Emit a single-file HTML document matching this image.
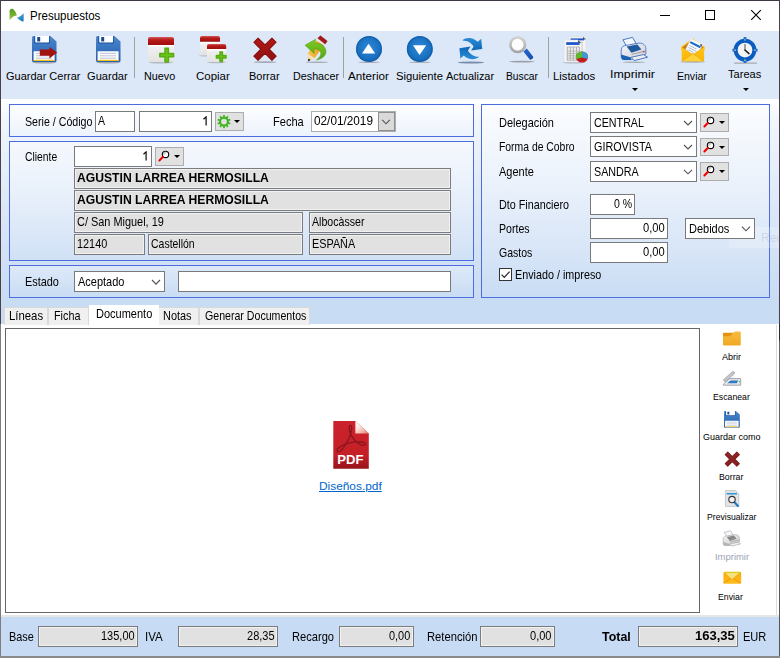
<!DOCTYPE html>
<html>
<head>
<meta charset="utf-8">
<title>Presupuestos</title>
<style>
*{box-sizing:border-box;margin:0;padding:0}
html,body{width:780px;height:658px;overflow:hidden;background:#fff}
body{font-family:"Liberation Sans",sans-serif;font-size:12px;color:#000;position:relative}
div,svg{position:absolute}
#win{left:0;top:0;width:780px;height:658px;background:#fff}
#title{left:1px;top:1px;width:778px;height:30px;background:#fff}
#tb{left:1px;top:31px;width:778px;height:68px;background:#dce8f8}
#body{left:1px;top:99px;width:778px;height:225px;background:linear-gradient(#ffffff 0px,#f1f6fd 20px,#d9e6f8 120px,#c8dcf4 200px,#c8dcf4 225px)}
.pnl{border:1px solid #4c6ce0;background:linear-gradient(rgba(255,255,255,.5),rgba(255,255,255,0))}
.t{white-space:nowrap;line-height:1;color:#000;transform-origin:0 0}
.in{background:#fff;border:1px solid #7a7a7a}
.ro{background:#e1e1e1;border:1px solid #7c7c7c;box-shadow:inset 0 0 0 1px #f1f1f1}
.btn{background:#e1e1e1;border:1px solid #adadad}
.sep{width:1px;height:40.5px;top:37px;background:#a0a0a0}
.tab{top:306.5px;height:18px;background:#f0f0f0;border:1px solid #d9d9d9;border-bottom:none}
.tab.sel{top:304.5px;height:24px;background:#fff;border-color:#fff}
#below{left:1px;top:324px;width:778px;height:293px;background:#fff}
#page{left:5px;top:328px;width:695px;height:285px;background:#fff;border:1px solid #666}
#status{left:1px;top:615px;width:778px;height:41px;background:#c7dcf4;border-top:2px solid #e7e7e7}
.arr{width:0;height:0;border-left:3px solid transparent;border-right:3px solid transparent;border-top:3.4px solid #000}
.sarr{width:0;height:0;border-left:3.3px solid transparent;border-right:3.3px solid transparent;border-top:3.3px solid #000;margin-left:-.4px}
</style>
</head>
<body>
<div id="win"></div>
<div id="title"></div>
<div id="tb"></div>
<div id="body"></div>
<div id="below"></div>
<!-- window borders -->
<div style="left:0;top:0;width:780px;height:1px;background:#3f3744"></div>
<div style="left:0;top:0;width:1px;height:324px;background:#4a4048"></div>
<div style="left:0;top:324px;width:1.3px;height:334px;background:#7d7d7d"></div>
<div style="left:779px;top:0;width:1px;height:324px;background:#4a4050"></div>
<div style="left:776px;top:324.5px;width:1.3px;height:291px;background:#dcdcdc"></div>
<div style="left:779px;top:324px;width:1px;height:292px;background:linear-gradient(#2a2a34 0,#2a2a34 16px,#666 17px,#5a5a5a 100%)"></div>
<div style="left:779px;top:616px;width:1px;height:42px;background:#555"></div>
<div style="left:0;top:656px;width:780px;height:2px;background:#8a8a8a"></div>

<!-- title bar controls -->
<svg style="left:8px;top:7px" width="18" height="17" viewBox="8 7 18 17"><defs><linearGradient id="ga" x1="0" y1="0" x2="0" y2="1"><stop offset="0" stop-color="#4f9a1e"/><stop offset="1" stop-color="#9ac83c"/></linearGradient><linearGradient id="gb" x1="0" y1="0" x2="1" y2="1"><stop offset="0" stop-color="#5ab0e0"/><stop offset="1" stop-color="#1470b8"/></linearGradient></defs><path d="M9.6 20.6V10.2C10.6 8.6 12.6 8.2 13.6 9.4C15.4 11.6 16.6 13.4 16.8 15.6C14 15.4 11.4 17.6 9.6 20.6Z" fill="url(#ga)"/><path d="M23.6 13.2V21.6C21 21.4 18.6 20 17 17.6C19.6 16.8 21.8 15.2 23.6 13.2Z" fill="url(#gb)"/></svg>
<svg style="left:659px;top:10px" width="12" height="12" viewBox="0 0 12 12"><path d="M1 5.5H11" stroke="#000" stroke-width="1" fill="none"/></svg>
<svg style="left:704px;top:9px" width="12" height="12" viewBox="0 0 12 12"><rect x="1.5" y="1.5" width="9" height="9" stroke="#000" stroke-width="1" fill="none"/></svg>
<svg style="left:750px;top:9px" width="12" height="12" viewBox="0 0 12 12"><path d="M1.2 1.2L10.8 10.8M10.8 1.2L1.2 10.8" stroke="#000" stroke-width="1.1" fill="none"/></svg>

<!-- toolbar -->
<div class="sep" style="left:134px"></div>
<div class="sep" style="left:343px"></div>
<div class="sep" style="left:548px"></div>
<svg style="left:30px;top:34px" width="30" height="31" viewBox="30 34 30 31"><defs><linearGradient id="f1b" x1="0" y1="0" x2="0" y2="1"><stop offset="0" stop-color="#4a88d0"/><stop offset=".5" stop-color="#3873be"/><stop offset="1" stop-color="#285fab"/></linearGradient></defs><ellipse cx="44.5" cy="62.6" rx="12.5" ry="0.8" fill="#8a8a90" opacity="0.7"/><g transform="translate(32 36) scale(1.0)"><path d="M1.6 0H18.4L24.5 5.6V24.4Q24.5 26 22.9 26H1.6Q0 26 0 24.4V1.6Q0 0 1.6 0Z" fill="url(#f1b)"/><path d="M2.2 0.2H17.8V6.4Q17.8 7.6 16.6 7.6H3.4Q2.2 7.6 2.2 6.4Z" fill="#1d4f97"/><path d="M3.2 0H17V5.8Q17 6.6 16.2 6.6H4Q3.2 6.6 3.2 5.8Z" fill="#fff"/><rect x="5.2" y="1" width="3" height="4.6" rx=".5" fill="#164a98"/><rect x="1.6" y="15.2" width="21" height="9.8" rx=".6" fill="#fdfdfd"/><rect x="1.6" y="23.8" width="21" height="1.2" fill="#f2c41a"/><path d="M4 17.4H20M4 19.8H20M4 22.2H20" stroke="#a9b4cc" stroke-width=".8"/><path d="M7.8 13.6H17.4V11L25.2 16.5L17.4 22.6V19.8H7.8Z" fill="#a21410"/></g></svg>
<svg style="left:94px;top:34px" width="30" height="31" viewBox="94 34 30 31"><defs><linearGradient id="f2b" x1="0" y1="0" x2="0" y2="1"><stop offset="0" stop-color="#4a88d0"/><stop offset=".5" stop-color="#3873be"/><stop offset="1" stop-color="#285fab"/></linearGradient></defs><ellipse cx="108.5" cy="62.6" rx="12.5" ry="0.8" fill="#8a8a90" opacity="0.7"/><g transform="translate(96 36) scale(1.0)"><path d="M1.6 0H18.4L24.5 5.6V24.4Q24.5 26 22.9 26H1.6Q0 26 0 24.4V1.6Q0 0 1.6 0Z" fill="url(#f2b)"/><path d="M2.2 0.2H17.8V6.4Q17.8 7.6 16.6 7.6H3.4Q2.2 7.6 2.2 6.4Z" fill="#1d4f97"/><path d="M3.2 0H17V5.8Q17 6.6 16.2 6.6H4Q3.2 6.6 3.2 5.8Z" fill="#fff"/><rect x="5.2" y="1" width="3" height="4.6" rx=".5" fill="#164a98"/><rect x="1.6" y="15.2" width="21" height="9.8" rx=".6" fill="#fdfdfd"/><rect x="1.6" y="23.8" width="21" height="1.2" fill="#f2c41a"/><path d="M4 17.4H20M4 19.8H20M4 22.2H20" stroke="#a9b4cc" stroke-width=".8"/></g></svg>
<svg style="left:146px;top:34px" width="32" height="31" viewBox="146 34 32 31"><defs><linearGradient id="nr" x1="0" y1="0" x2="0" y2="1"><stop offset="0" stop-color="#d45a5a"/><stop offset=".35" stop-color="#b81c1c"/><stop offset="1" stop-color="#a00c0c"/></linearGradient><linearGradient id="nw" x1="0" y1="0" x2="0" y2="1"><stop offset="0" stop-color="#f2f2f2"/><stop offset="1" stop-color="#e2e2e2"/></linearGradient></defs><ellipse cx="161" cy="62.6" rx="12.5" ry="0.8" fill="#9a9aa0" opacity="0.6"/><rect x="148" y="45" width="26" height="17" fill="url(#nw)"/><rect x="148" y="45" width="26" height="1.4" fill="#fff"/><path d="M148 45V39Q148 37 150 37H172Q174 37 174 39V45Z" fill="url(#nr)"/><path d="M165.0 48.2h3.4v5.2h5.2v3.4h-5.2v5.2h-3.4v-5.2h-5.2v-3.4h5.2z" fill="#69c416" stroke="#58ac12" stroke-width="1.5" stroke-linejoin="round"/></svg>
<svg style="left:198px;top:34px" width="32" height="31" viewBox="198 34 32 31"><defs><linearGradient id="cr" x1="0" y1="0" x2="0" y2="1"><stop offset="0" stop-color="#d45a5a"/><stop offset=".35" stop-color="#b81c1c"/><stop offset="1" stop-color="#a00c0c"/></linearGradient><linearGradient id="cw" x1="0" y1="0" x2="0" y2="1"><stop offset="0" stop-color="#f2f2f2"/><stop offset="1" stop-color="#e2e2e2"/></linearGradient></defs><ellipse cx="207" cy="55.8" rx="8" ry="0.7" fill="#9a9aa0" opacity="0.6"/><ellipse cx="216.5" cy="62.5" rx="9.5" ry="0.7" fill="#9a9aa0" opacity="0.6"/><rect x="200" y="41.8" width="20" height="13.5" fill="url(#cw)"/><rect x="200" y="41.8" width="20" height="1.4" fill="#fff"/><path d="M200 41.8V38Q200 36 202 36H218Q220 36 220 38V41.8Z" fill="url(#cr)"/><rect x="207" y="49" width="19.2" height="13" fill="url(#cw)"/><rect x="207" y="49" width="19.2" height="1.4" fill="#fff"/><path d="M207 49V46Q207 44 209 44H224.2Q226.2 44 226.2 46V49Z" fill="url(#cr)"/><path d="M220.0 52.0h2.4v3.5999999999999996h3.5999999999999996v2.4h-3.5999999999999996v3.5999999999999996h-2.4v-3.5999999999999996h-3.5999999999999996v-2.4h3.5999999999999996z" fill="#69c416" stroke="#58ac12" stroke-width="1.5" stroke-linejoin="round"/></svg>
<svg style="left:250px;top:34px" width="30" height="31" viewBox="250 34 30 31"><defs><linearGradient id="dx" x1="0" y1="0" x2="1" y2="1"><stop offset="0" stop-color="#bb1c1c"/><stop offset="1" stop-color="#860c0c"/></linearGradient></defs><ellipse cx="265" cy="62.2" rx="11.5" ry="0.9" fill="#8a9098" opacity="0.7"/><g transform="rotate(45 265 49.2)"><path d="M262.0 36.400000000000006h6.0v9.8h9.8v6.0h-9.8v9.8h-6.0v-9.8h-9.8v-6.0h9.8z" fill="url(#dx)" stroke="#860c0c" stroke-width="1" stroke-linejoin="round"/></g></svg>
<svg style="left:302px;top:34px" width="30" height="31" viewBox="302 34 30 31"><defs><linearGradient id="up" x1="0" y1="0" x2="1" y2="0"><stop offset="0" stop-color="#f6c85a"/><stop offset=".6" stop-color="#f0a826"/><stop offset="1" stop-color="#e09018"/></linearGradient><linearGradient id="ug" x1="0" y1="0" x2="0" y2="1"><stop offset="0" stop-color="#7ccc22"/><stop offset="1" stop-color="#55a416"/></linearGradient></defs><ellipse cx="317" cy="62.3" rx="11.5" ry="0.8" fill="#8a8a90" opacity="0.65"/><path d="M316.2 40.6L323.8 45.4L314.4 58.2L307.6 53.4Z" fill="url(#up)"/><path d="M307.6 53.4L314.4 58.2L308 61.2Z" fill="#f7dfae"/><path d="M308.6 58.6L310.6 60L307.8 61.4Z" fill="#111"/><path d="M316.8 39.8L317.6 38.6L325.4 43.6L324.4 45.2Z" fill="#e8e8e8"/><path d="M317.8 38.2L320.4 35.8L327.2 41L325.2 44Z" fill="#a81616" stroke="#8c1010" stroke-width=".5" stroke-linejoin="round"/><path d="M305 45.2L315.6 39.2L314.6 43.2C321 42.6 326 46.6 326 51.6C326 55.6 322 59.2 316.4 60C320 57.6 321.6 54.6 320.6 52C319.6 49.6 317 48.6 313.8 49L314.2 53.4Z" fill="url(#ug)" stroke="#4a9412" stroke-width=".5" stroke-linejoin="round"/></svg>
<svg style="left:354px;top:34px" width="30" height="31" viewBox="354 34 30 31"><defs><radialGradient id="pc" cx=".5" cy=".45" r=".6"><stop offset="0" stop-color="#2d8ad8"/><stop offset=".7" stop-color="#1a70c0"/><stop offset="1" stop-color="#115daa"/></radialGradient></defs><ellipse cx="369" cy="62.3" rx="11" ry="0.8" fill="#8a8a90" opacity="0.65"/><circle cx="369" cy="49" r="13" fill="url(#pc)"/><circle cx="369" cy="49" r="12.2" fill="none" stroke="#0f5aa6" stroke-width="1.2" opacity=".6"/><path d="M368.6 43.8L375.2 53.4H362Z" fill="#fff"/></svg>
<svg style="left:405px;top:34px" width="30" height="31" viewBox="405 34 30 31"><defs><radialGradient id="qc" cx=".5" cy=".45" r=".6"><stop offset="0" stop-color="#2d8ad8"/><stop offset=".7" stop-color="#1a70c0"/><stop offset="1" stop-color="#115daa"/></radialGradient></defs><ellipse cx="419.8" cy="62.3" rx="11" ry="0.8" fill="#8a8a90" opacity="0.65"/><circle cx="419.8" cy="49" r="13" fill="url(#qc)"/><circle cx="419.8" cy="49" r="12.2" fill="none" stroke="#0f5aa6" stroke-width="1.2" opacity=".6"/><path d="M413.0 45.2H426.2L419.5 55Z" fill="#fff"/></svg>
<svg style="left:456px;top:34px" width="30" height="31" viewBox="456 34 30 31"><defs><linearGradient id="rf" x1="0" y1="0" x2="0" y2="1" ><stop offset="0" stop-color="#2b8cd8"/><stop offset="1" stop-color="#0f66b4"/></linearGradient></defs><ellipse cx="471" cy="62.5" rx="13" ry="1" fill="#5f7499" opacity="0.8"/><path d="M462.3 40.4C464.6 38.2 468 37.6 471 38.2C473.8 38.8 476.2 40.2 477.8 41.8L481.2 38.7L482.2 49L471 50.6L473.6 46.8C472.6 44.8 471.2 43.4 469.4 42.3C467.4 41.1 465 40.4 462.3 40.4Z" fill="url(#rf)"/><path d="M462.3 40.4C464.6 38.2 468 37.6 471 38.2C473.8 38.8 476.2 40.2 477.8 41.8L481.2 38.7L482.2 49L471 50.6L473.6 46.8C472.6 44.8 471.2 43.4 469.4 42.3C467.4 41.1 465 40.4 462.3 40.4Z" fill="url(#rf)" transform="rotate(180 470.8 48.6)"/></svg>
<svg style="left:506px;top:34px" width="32" height="31" viewBox="506 34 32 31"><defs><linearGradient id="sh" x1="0" y1="0" x2="1" y2="1"><stop offset="0" stop-color="#2a68cc"/><stop offset="1" stop-color="#1450b0"/></linearGradient><linearGradient id="sr" x1="0" y1="0" x2="0" y2="1"><stop offset="0" stop-color="#d2d2d2"/><stop offset="1" stop-color="#a4a4a4"/></linearGradient></defs><ellipse cx="521.8" cy="61.6" rx="13" ry="0.9" fill="#808088" opacity="0.7"/><path d="M523.4 51.6L526.8 48.6L533 56.6C534 58 531 60.6 529.8 59.4Z" fill="url(#sh)"/><circle cx="517.7" cy="44.7" r="7.3" fill="#f6f6f6" stroke="url(#sr)" stroke-width="2.6"/><circle cx="517.2" cy="44.2" r="5.2" fill="#fff" opacity=".8"/></svg>
<svg style="left:561px;top:34px" width="30" height="31" viewBox="561 34 30 31"><ellipse cx="574" cy="62.6" rx="11.5" ry="0.8" fill="#9a9aa0" opacity="0.6"/><path d="M569 36.7H583L586 39.6V58H569Z" fill="#f4f4f4" stroke="#d8d8d8" stroke-width=".5"/><path d="M583 36.7L586 39.6H583Z" fill="#555"/><rect x="570.6" y="38.4" width="13.4" height="2" fill="#1a52c8"/><path d="M582 42V55" stroke="#c8c8c8" stroke-width="2" stroke-dasharray="1.2 1"/><path d="M564.2 39.9H578L581.3 43V62H564.2Z" fill="#f6f6f6" stroke="#dcdcdc" stroke-width=".5"/><path d="M578 39.9L581.3 43H578Z" fill="#555"/><rect x="566.2" y="42.2" width="13.4" height="2.7" fill="#1a52c8"/><rect x="567" y="47" width="12.6" height="13.4" fill="#ececec"/><path d="M567.2 47V60.4" stroke="#a8a8a8" stroke-width=".9"/><path d="M570.3 47V60.4" stroke="#a8a8a8" stroke-width=".9"/><path d="M573.4 47V60.4" stroke="#a8a8a8" stroke-width=".9"/><path d="M576.5 47V60.4" stroke="#a8a8a8" stroke-width=".9"/><path d="M579.4 47V60.4" stroke="#a8a8a8" stroke-width=".9"/><path d="M567 47H579.6" stroke="#b0b0b0" stroke-width=".8"/><path d="M567 51.2H579.6" stroke="#b0b0b0" stroke-width=".8"/><path d="M567 53.5H579.6" stroke="#b0b0b0" stroke-width=".8"/><path d="M567 55.8H579.6" stroke="#b0b0b0" stroke-width=".8"/><path d="M567 58.1H579.6" stroke="#b0b0b0" stroke-width=".8"/><path d="M567 60.3H579.6" stroke="#b0b0b0" stroke-width=".8"/><ellipse cx="582" cy="57" rx="6.1" ry="5.6" fill="#c41c1c"/><path d="M582 57.6L576.2 59A6.1 5.6 0 0 1 582 51.4Z" fill="#5cba2e"/><path d="M582 57.6V51.4A6.1 5.6 0 0 1 587.7 59Z" fill="#3c9cd2"/></svg>
<svg style="left:619px;top:34px" width="31" height="31" viewBox="619 34 31 31"><defs><linearGradient id="Ppb" x1="0" y1="0" x2="1" y2="1"><stop offset="0" stop-color="#f4f4f6"/><stop offset="1" stop-color="#cfd2da"/></linearGradient></defs><ellipse cx="634" cy="62.3" rx="11.5" ry="0.8" fill="#8a8a90" opacity="0.6"/><path d="M622.9 39.8L632.5 37.4L636.3 43.6L626.6 46.4Z" fill="#f4f7fc" stroke="#3a6cc0" stroke-width=".9" stroke-linejoin="round"/><path d="M621.2 50C621.2 46.6 624 45.4 627 45.2L638.6 43.2C643 42.6 645.8 45.4 645.8 48.6V54.2L631.4 59.6H624.4C622.4 59.6 621.2 58.4 621.2 56.6Z" fill="url(#Ppb)" stroke="#3a6cc0" stroke-width=".8"/><path d="M621.2 54.4L631 57.4V60H624.2C622.4 60 621.2 58.8 621.2 57.2Z" fill="#1c62b4"/><path d="M626.6 46.6L637.4 44.4L641.4 49.6L631.4 52.8Z" fill="#1f5a9e"/><path d="M631 57.3L643.4 54.6L647.6 57.2L634.2 60.6Z" fill="#eeeeee" stroke="#3a6cc0" stroke-width=".9" stroke-linejoin="round"/><path d="M631.6 54.4L643 51.6" stroke="#555" stroke-width=".8" opacity=".6"/><circle cx="643.9" cy="51.6" r=".9" fill="#d03030"/></svg>
<svg style="left:679px;top:35px" width="29" height="30" viewBox="679 35 29 30"><defs><linearGradient id="mb" x1="0" y1="0" x2="0" y2="1"><stop offset="0" stop-color="#ffc61e"/><stop offset="1" stop-color="#fbb400"/></linearGradient></defs><ellipse cx="692.8" cy="61.9" rx="12.5" ry="0.8" fill="#8a92a8" opacity="0.6"/><path d="M681.7 47L692.6 38.9L704.1 47V50H681.7Z" fill="#c87a16" stroke="#ffc62a" stroke-width="1.2" stroke-linejoin="round"/><g transform="translate(0.6 2.3) rotate(27 694 44)"><rect x="687.4" y="38.6" width="13" height="14" fill="#f8f9fc" stroke="#e0e4ec" stroke-width=".4"/><rect x="688.2" y="41.2" width="11.4" height="2.1" fill="#1c6ccc"/><path d="M689 45.6H697M689 47.8H698M689 50H696" stroke="#a8b4cc" stroke-width=".8"/><path d="M698.6 39.2L700 41" stroke="#333" stroke-width="1.3"/></g><path d="M681.7 47L692.8 54.6L704.1 47V60.2Q704.1 61.5 702.8 61.5H683Q681.7 61.5 681.7 60.2Z" fill="url(#mb)"/><path d="M682.6 61L692.8 53.4L703.2 61" fill="#ffd23a" stroke="#e09a10" stroke-width=".5"/><path d="M681.9 47.3L692.8 54.8L703.9 47.3" fill="none" stroke="#e8a010" stroke-width=".5"/></svg>
<svg style="left:730px;top:34px" width="30" height="31" viewBox="730 34 30 31"><rect x="734" y="62.4" width="23" height="1.4" fill="#a6a9ad" rx=".6"/><path d="M743.6 37H746.4V40H743.6ZM743.6 60.4H746.4V63H743.6ZM732.4 48.8H735.4V51.4H732.4ZM754.6 48.8H757.6V51.4H754.6Z" fill="#2a74d0"/><circle cx="745" cy="50.1" r="9.4" fill="#f4f4f4" stroke="#0a5cc0" stroke-width="4"/><path d="M745 39.2V40.6M745 59.6V61M734.4 50.1H735.8M754.2 50.1H755.6" stroke="#f0e6a0" stroke-width="1.2"/><path d="M745 50.3V44" stroke="#777" stroke-width="1.3"/><path d="M745 50.1L749 53.6" stroke="#222" stroke-width="1.5" stroke-linecap="round"/></svg>
<div class="arr" style="left:631.6px;top:87.9px"></div>
<div class="arr" style="left:742.6px;top:87.9px"></div>

<!-- panels -->
<div class="pnl" style="left:9px;top:104px;width:465px;height:33px"></div>
<div class="pnl" style="left:9px;top:141px;width:465px;height:120px"></div>
<div class="pnl" style="left:9px;top:265px;width:465px;height:33px;background:linear-gradient(rgba(255,255,255,.3),rgba(255,255,255,0))"></div>
<div class="pnl" style="left:481px;top:104px;width:289px;height:194px"></div>
<div style="left:729px;top:227px;width:50px;height:21px;background:rgba(255,255,255,.22)"></div>
<div class="t" style="left:761px;top:231px;font-size:12px;line-height:14px;color:rgba(120,135,165,.22)">Rec</div>

<!-- inputs -->
<div class="in" style="left:95px;top:111px;width:40px;height:21px"></div>
<div class="in" style="left:139px;top:111px;width:73px;height:21px"></div>
<div class="btn" style="left:215px;top:112px;width:29px;height:19px"></div>
<svg style="left:216px;top:113px" width="16" height="17" viewBox="216 113 16 17"><path d="M223.14 115.06L224.86 115.06L224.93 116.79L226.09 117.17L227.15 115.80L228.54 116.81L227.58 118.25L228.29 119.24L229.96 118.76L230.49 120.39L228.86 120.99L228.86 122.21L230.49 122.81L229.96 124.44L228.29 123.97L227.57 124.95L228.54 126.39L227.15 127.40L226.08 126.04L224.92 126.41L224.86 128.14L223.14 128.14L223.07 126.41L221.91 126.03L220.85 127.40L219.46 126.39L220.42 124.95L219.71 123.96L218.04 124.44L217.51 122.81L219.14 122.21L219.14 120.99L217.51 120.39L218.04 118.76L219.71 119.23L220.43 118.25L219.46 116.81L220.85 115.80L221.92 117.16L223.08 116.79Z M226.9 121.6A2.9 2.9 0 1 0 221.1 121.6A2.9 2.9 0 1 0 226.9 121.6Z" fill="#3eb41e" fill-rule="evenodd"/></svg>
<div class="sarr" style="left:234px;top:120px"></div>
<div class="in" style="left:311px;top:111px;width:85px;height:21px;border-color:#adadad"></div>
<div style="left:378px;top:112px;width:17px;height:19px;background:#dadada;border:1px solid #8f8f8f"></div>
<svg style="left:381px;top:118px" width="10" height="7" viewBox="381 118 10 7"><path d="M382.2 119.8L386.0 123.8L389.8 119.8" fill="none" stroke="#505050" stroke-width="1.1"/></svg>

<div class="in" style="left:74px;top:146px;width:78px;height:20.5px"></div>
<div class="btn" style="left:155px;top:147px;width:29px;height:18.5px"></div>
<svg style="left:157px;top:148px" width="16" height="16" viewBox="157 148 16 16"><circle cx="165.5" cy="154.4" r="3.2" fill="#fff" stroke="#000" stroke-width="1.1"/><path d="M163.1 153.4L165.3 151.6M163.3 155.0L166.3 152.0" stroke="#888" stroke-width=".7"/><path d="M163.0 156.8L159.4 160.5" stroke="#f00000" stroke-width="2" stroke-linecap="round"/></svg>
<div class="sarr" style="left:174px;top:155px"></div>
<div class="ro" style="left:74px;top:168px;width:377px;height:20.5px"></div>
<div class="ro" style="left:74px;top:190px;width:377px;height:20.5px"></div>
<div class="ro" style="left:74px;top:212px;width:229px;height:20.5px"></div>
<div class="ro" style="left:309px;top:212px;width:142px;height:20.5px"></div>
<div class="ro" style="left:74px;top:234px;width:71px;height:20.5px"></div>
<div class="ro" style="left:148px;top:234px;width:155px;height:20.5px"></div>
<div class="ro" style="left:309px;top:234px;width:142px;height:20.5px"></div>
<div class="in" style="left:74px;top:271px;width:91px;height:20.5px"></div>
<svg style="left:151px;top:279px" width="11" height="7" viewBox="151 279 11 7"><path d="M152 280L156.0 284.2L160 280" fill="none" stroke="#505050" stroke-width="1.1"/></svg>
<div class="in" style="left:178px;top:271px;width:273px;height:20.5px"></div>

<div class="in" style="left:590px;top:112px;width:107px;height:20.5px"></div>
<div class="in" style="left:590px;top:136px;width:107px;height:20.5px"></div>
<div class="in" style="left:590px;top:161px;width:107px;height:20.5px"></div>
<svg style="left:683px;top:120px" width="11" height="7" viewBox="683 120 11 7"><path d="M684 121L688.0 125L692 121" fill="none" stroke="#505050" stroke-width="1.1"/></svg>
<svg style="left:683px;top:144px" width="11" height="7" viewBox="683 144 11 7"><path d="M684 145L688.0 149L692 145" fill="none" stroke="#505050" stroke-width="1.1"/></svg>
<svg style="left:683px;top:168px" width="11" height="7" viewBox="683 168 11 7"><path d="M684 169.8L688.0 173.8L692 169.8" fill="none" stroke="#505050" stroke-width="1.1"/></svg>
<div class="btn" style="left:700px;top:113px;width:29px;height:18.5px"></div>
<div class="btn" style="left:700px;top:137.5px;width:29px;height:18px"></div>
<div class="btn" style="left:700px;top:162px;width:29px;height:18.5px"></div>
<svg style="left:702px;top:114.1px" width="16" height="16" viewBox="702 114.1 16 16"><circle cx="710.5" cy="120.5" r="3.2" fill="#fff" stroke="#000" stroke-width="1.1"/><path d="M708.1 119.5L710.3 117.7M708.3 121.1L711.3 118.1" stroke="#888" stroke-width=".7"/><path d="M708.0 122.9L704.4 126.6" stroke="#f00000" stroke-width="2" stroke-linecap="round"/></svg>
<svg style="left:702px;top:138.6px" width="16" height="16" viewBox="702 138.6 16 16"><circle cx="710.5" cy="145.0" r="3.2" fill="#fff" stroke="#000" stroke-width="1.1"/><path d="M708.1 144.0L710.3 142.2M708.3 145.6L711.3 142.6" stroke="#888" stroke-width=".7"/><path d="M708.0 147.4L704.4 151.1" stroke="#f00000" stroke-width="2" stroke-linecap="round"/></svg>
<svg style="left:702px;top:163.1px" width="16" height="16" viewBox="702 163.1 16 16"><circle cx="710.5" cy="169.5" r="3.2" fill="#fff" stroke="#000" stroke-width="1.1"/><path d="M708.1 168.5L710.3 166.7M708.3 170.1L711.3 167.1" stroke="#888" stroke-width=".7"/><path d="M708.0 171.9L704.4 175.6" stroke="#f00000" stroke-width="2" stroke-linecap="round"/></svg>
<div class="sarr" style="left:719px;top:121px"></div>
<div class="sarr" style="left:719px;top:145.5px"></div>
<div class="sarr" style="left:719px;top:170px"></div>
<div class="in" style="left:590px;top:194px;width:45px;height:20.5px"></div>
<div class="in" style="left:590px;top:218px;width:78px;height:20.5px"></div>
<div class="in" style="left:685px;top:218px;width:70px;height:20.5px"></div>
<svg style="left:741px;top:225px" width="11" height="7" viewBox="741 225 11 7"><path d="M742 226.6L746.0 230.8L750 226.6" fill="none" stroke="#505050" stroke-width="1.1"/></svg>
<div class="in" style="left:590px;top:242px;width:78px;height:20.5px"></div>
<div style="left:499px;top:268px;width:13px;height:13px;background:#fff;border:1px solid #333"></div>
<svg style="left:499px;top:268px" width="13" height="13" viewBox="0 0 13 13"><path d="M2.6 6.6L5.3 9.3L10.6 3.6" stroke="#222" stroke-width="1.2" fill="none"/></svg>

<!-- tabs -->
<div class="tab" style="left:3.5px;width:44.5px"></div>
<div class="tab" style="left:47.5px;width:41.5px"></div>
<div class="tab" style="left:158px;width:41px"></div>
<div class="tab" style="left:198.5px;width:111px"></div>
<div class="tab sel" style="left:88.5px;width:70px"></div>
<div id="page"></div>
<svg style="left:332px;top:420px" width="38" height="50" viewBox="332 420 38 50"><defs><linearGradient id="pd" x1="0" y1="0" x2="0" y2="1"><stop offset="0" stop-color="#cc232b"/><stop offset=".7" stop-color="#c41f27"/><stop offset="1" stop-color="#98141c"/></linearGradient><linearGradient id="pf" x1="0" y1="0" x2="1" y2="1"><stop offset="0" stop-color="#fff"/><stop offset=".35" stop-color="#fbe8e4"/><stop offset="1" stop-color="#e8806c"/></linearGradient></defs><path d="M333.3 421H355.4L368.8 433.6V468.8H333.3Z" fill="url(#pd)"/><path d="M355.4 421L368.8 433.6H355.4Z" fill="url(#pf)"/><path d="M350.2 425.4C351.6 425.2 352 427 351.6 429.6C351 433.6 348.6 439.6 345.6 444.6C343 448.8 339.6 452.6 337.6 451.6C336 450.8 337.6 448 341.6 445.8C346.6 443.2 355.2 441.6 361 442C365.2 442.3 366.4 444 364.8 445C362.8 446.2 358.4 444.4 354.8 440.4C351.2 436.4 349 430.6 349.2 427.4C349.3 426 349.6 425.5 350.2 425.4Z" fill="none" stroke="#8c161c" stroke-width="1.3"/><text x="337.3" y="464" font-family="Liberation Sans" font-weight="700" font-size="12" fill="#fff" textLength="26.2" lengthAdjust="spacingAndGlyphs">PDF</text></svg>
<!-- sidebar icons -->
<svg style="left:722px;top:330px" width="20" height="17" viewBox="722 330 20 17"><defs><linearGradient id="fo" x1="0" y1="0" x2="0" y2="1"><stop offset="0" stop-color="#f8bc40"/><stop offset="1" stop-color="#f0a824"/></linearGradient></defs><path d="M723 333.6Q723 332.8 723.8 332.8H733.4V337H723Z" fill="#e2920e"/><path d="M723 337.2Q723 336.2 724 336.2H730.2L734 332Q734.6 331.4 735.4 331.4H739.8Q740.8 331.4 740.8 332.4V344.6Q740.8 345.6 739.8 345.6H724Q723 345.6 723 344.6Z" fill="url(#fo)"/></svg>
<svg style="left:722px;top:370px" width="20" height="17" viewBox="722 370 20 17"><path d="M725.2 381.4L734.2 373.4V378.6H729Z" fill="#f6f6f8"/><path d="M723.2 380L732.8 371.4L734.3 372V373.6L725.2 381.8Z" fill="#c4c7cc" stroke="#888c92" stroke-width=".6" stroke-linejoin="round"/><path d="M723.4 384.2L729.4 378.6H740.7V385.2H723.4Z" fill="#e6e8ec" stroke="#7e838a" stroke-width=".7" stroke-linejoin="round"/><path d="M727.2 383.2L730.6 380.4H738.2L736.8 383.2Z" fill="#2f78c6"/><circle cx="739.5" cy="381.7" r=".7" fill="#3cc43c"/></svg>
<svg style="left:722px;top:409px" width="20" height="21" viewBox="722 409 20 21"><defs><linearGradient id="f3b" x1="0" y1="0" x2="0" y2="1"><stop offset="0" stop-color="#4a88d0"/><stop offset=".5" stop-color="#3873be"/><stop offset="1" stop-color="#285fab"/></linearGradient></defs><g transform="translate(724 411) scale(0.645)"><path d="M1.6 0H18.4L24.5 5.6V24.4Q24.5 26 22.9 26H1.6Q0 26 0 24.4V1.6Q0 0 1.6 0Z" fill="url(#f3b)"/><path d="M2.2 0.2H17.8V6.4Q17.8 7.6 16.6 7.6H3.4Q2.2 7.6 2.2 6.4Z" fill="#1d4f97"/><path d="M3.2 0H17V5.8Q17 6.6 16.2 6.6H4Q3.2 6.6 3.2 5.8Z" fill="#fff"/><rect x="5.2" y="1" width="3" height="4.6" rx=".5" fill="#164a98"/><rect x="1.6" y="15.2" width="21" height="9.8" rx=".6" fill="#fdfdfd"/><rect x="1.6" y="23.8" width="21" height="1.2" fill="#f2c41a"/><path d="M4 17.4H20M4 19.8H20M4 22.2H20" stroke="#a9b4cc" stroke-width=".8"/></g></svg>
<svg style="left:723px;top:450px" width="19" height="19" viewBox="723 450 19 19"><defs><linearGradient id="sdx" x1="0" y1="0" x2="1" y2="1"><stop offset="0" stop-color="#972a2a"/><stop offset="1" stop-color="#7c1c1c"/></linearGradient></defs><g transform="rotate(45 732.3 459.2)"><path d="M730.5 451.0h3.6v6.3999999999999995h6.3999999999999995v3.6h-6.3999999999999995v6.3999999999999995h-3.6v-6.3999999999999995h-6.3999999999999995v-3.6h6.3999999999999995z" fill="url(#sdx)" stroke="#7c1c1c" stroke-width="1" stroke-linejoin="round"/></g></svg>
<svg style="left:724px;top:489px" width="17" height="19" viewBox="724 489 17 19"><path d="M725.4 490.6H735.6L738.8 493.6V506.4H725.4Z" fill="#e4e4e4" stroke="#b8b8b8" stroke-width=".7"/><rect x="726.6" y="493" width="10.4" height="1.5" fill="#2a9ada"/><path d="M734 501.8L738 506" stroke="#1a7ac8" stroke-width="2" stroke-linecap="round"/><circle cx="732" cy="499.6" r="3.2" fill="#f4f4f4" stroke="#333" stroke-width="1.1"/></svg>
<svg style="left:721px;top:529px" width="22" height="20" viewBox="721 529 22 20"><defs><linearGradient id="Gpb" x1="0" y1="0" x2="1" y2="1"><stop offset="0" stop-color="#f4f4f4"/><stop offset="1" stop-color="#c8c8c8"/></linearGradient></defs><g transform="translate(312.113 506.054) scale(0.6617)"><path d="M622.9 39.8L632.5 37.4L636.3 43.6L626.6 46.4Z" fill="#f4f7fc" stroke="#a2a2a2" stroke-width=".9" stroke-linejoin="round"/><path d="M621.2 50C621.2 46.6 624 45.4 627 45.2L638.6 43.2C643 42.6 645.8 45.4 645.8 48.6V54.2L631.4 59.6H624.4C622.4 59.6 621.2 58.4 621.2 56.6Z" fill="url(#Gpb)" stroke="#a2a2a2" stroke-width=".8"/><path d="M621.2 54.4L631 57.4V60H624.2C622.4 60 621.2 58.8 621.2 57.2Z" fill="#b4b4b4"/><path d="M626.6 46.6L637.4 44.4L641.4 49.6L631.4 52.8Z" fill="#8a8a8a"/><path d="M631 57.3L643.4 54.6L647.6 57.2L634.2 60.6Z" fill="#eeeeee" stroke="#a2a2a2" stroke-width=".9" stroke-linejoin="round"/><path d="M631.6 54.4L643 51.6" stroke="#555" stroke-width=".8" opacity=".6"/><circle cx="643.9" cy="51.6" r=".9" fill="#aaaaaa"/></g></svg>
<svg style="left:722px;top:570px" width="21" height="16" viewBox="722 570 21 16"><defs><linearGradient id="sm" x1="0" y1="0" x2="0" y2="1"><stop offset="0" stop-color="#ffa80c"/><stop offset="1" stop-color="#ffbc1c"/></linearGradient></defs><rect x="723.4" y="572" width="17.8" height="11.8" rx="1.4" fill="url(#sm)"/><path d="M723.6 583.2L731.9 577.6L741 583.2" fill="none" stroke="#e08c0c" stroke-width=".7"/><path d="M724.4 572.4H740.2L732 579.4Z" fill="#f2e47a" stroke="#e8a818" stroke-width=".5"/><rect x="724" y="571.8" width="16.6" height=".9" fill="#d6d010"/></svg>

<div id="status"></div>
<div class="ro" style="left:38px;top:626px;width:100px;height:20.5px"></div>
<div class="ro" style="left:178px;top:626px;width:100px;height:20.5px"></div>
<div class="ro" style="left:339px;top:626px;width:75px;height:20.5px"></div>
<div class="ro" style="left:480px;top:626px;width:75px;height:20.5px"></div>
<div class="ro" style="left:638px;top:626px;width:100px;height:20.5px"></div>

<svg style="left:203.1px;top:115.6px" width="6" height="11" viewBox="0 0 6 11"><path d="M0.5 3.2L3.1 0.9V9.6" stroke="#000" stroke-width="1.15" fill="none" stroke-linejoin="miter"/></svg>
<svg style="left:142.9px;top:150.6px" width="6" height="11" viewBox="0 0 6 11"><path d="M0.5 3.2L3.1 0.9V9.6" stroke="#000" stroke-width="1.15" fill="none" stroke-linejoin="miter"/></svg>
<div class="t" style="left:29.69px;top:9px;font-size:12.6px;line-height:14px;transform:scaleX(0.9124)">Presupuestos</div>
<div class="t" style="left:6.01px;top:69px;font-size:11.7px;line-height:13px;transform:scaleX(0.9401)">Guardar Cerrar</div>
<div class="t" style="left:86.81px;top:69px;font-size:11.7px;line-height:13px;transform:scaleX(0.9496)">Guardar</div>
<div class="t" style="left:144.07px;top:69px;font-size:11.7px;line-height:13px;transform:scaleX(0.9266)">Nuevo</div>
<div class="t" style="left:195.79px;top:69px;font-size:11.7px;line-height:13px;transform:scaleX(0.9814)">Copiar</div>
<div class="t" style="left:248.66px;top:69px;font-size:11.7px;line-height:13px;transform:scaleX(0.9408)">Borrar</div>
<div class="t" style="left:292.68px;top:69px;font-size:11.7px;line-height:13px;transform:scaleX(0.9207)">Deshacer</div>
<div class="t" style="left:347.88px;top:69px;font-size:11.7px;line-height:13px;transform:scaleX(0.9994)">Anterior</div>
<div class="t" style="left:395.92px;top:69px;font-size:11.7px;line-height:13px;transform:scaleX(0.9634)">Siguiente</div>
<div class="t" style="left:446.48px;top:69px;font-size:11.7px;line-height:13px;transform:scaleX(0.9373)">Actualizar</div>
<div class="t" style="left:505.72px;top:69px;font-size:11.7px;line-height:13px;transform:scaleX(0.8794)">Buscar</div>
<div class="t" style="left:552.63px;top:69px;font-size:11.7px;line-height:13px;transform:scaleX(0.9685)">Listados</div>
<div class="t" style="left:610.41px;top:67px;font-size:11.7px;line-height:13px;transform:scaleX(1.0618)">Imprimir</div>
<div class="t" style="left:676.70px;top:69px;font-size:11.7px;line-height:13px;transform:scaleX(0.9000)">Enviar</div>
<div class="t" style="left:728.16px;top:67px;font-size:11.7px;line-height:13px;transform:scaleX(0.9484)">Tareas</div>
<div class="t" style="left:318.89px;top:480px;font-size:11.4px;line-height:12px;transform:scaleX(1.0425);color:#0066cc;text-decoration:underline;text-underline-offset:1px">Diseños.pdf</div>
<div class="t" style="left:722.00px;top:352px;font-size:9.3px;line-height:10px;transform:scaleX(0.9744)">Abrir</div>
<div class="t" style="left:713.30px;top:392px;font-size:9.3px;line-height:10px;transform:scaleX(0.9381)">Escanear</div>
<div class="t" style="left:702.92px;top:432px;font-size:9.3px;line-height:10px;transform:scaleX(0.9675)">Guardar como</div>
<div class="t" style="left:718.59px;top:472px;font-size:9.3px;line-height:10px;transform:scaleX(0.9440)">Borrar</div>
<div class="t" style="left:706.60px;top:512px;font-size:9.3px;line-height:10px;transform:scaleX(0.9279)">Previsualizar</div>
<div class="t" style="left:714.51px;top:552px;font-size:9.3px;line-height:10px;transform:scaleX(1.0154);color:#9aa3b5">Imprimir</div>
<div class="t" style="left:718.29px;top:592px;font-size:9.3px;line-height:10px;transform:scaleX(0.9412)">Enviar</div>
<div style="left:0;top:0;width:780px;height:658px;will-change:transform">
<div class="t" style="left:24.99px;top:114px;font-size:13px;line-height:15px;transform:scaleX(0.8185)">Serie / Código</div>
<div class="t" style="left:98.30px;top:113px;font-size:13px;line-height:15px;transform:scaleX(0.8116)">A</div>
<div class="t" style="left:272.65px;top:114px;font-size:13px;line-height:15px;transform:scaleX(0.8512)">Fecha</div>
<div class="t" style="left:314.25px;top:113px;font-size:13px;line-height:15px;transform:scaleX(0.9062)">02/01/2019</div>
<div class="t" style="left:25.30px;top:149px;font-size:13px;line-height:15px;transform:scaleX(0.7949)">Cliente</div>
<div class="t" style="left:76.65px;top:170px;font-size:13px;line-height:15px;transform:scaleX(0.9341);font-weight:700">AGUSTIN LARREA HERMOSILLA</div>
<div class="t" style="left:76.65px;top:192px;font-size:13px;line-height:15px;transform:scaleX(0.9341);font-weight:700">AGUSTIN LARREA HERMOSILLA</div>
<div class="t" style="left:76.97px;top:214px;font-size:13px;line-height:15px;transform:scaleX(0.8401)">C/ San Miguel, 19</div>
<div class="t" style="left:311.90px;top:214px;font-size:13px;line-height:15px;transform:scaleX(0.8156)">Albocàsser</div>
<div class="t" style="left:77.16px;top:236px;font-size:13px;line-height:15px;transform:scaleX(0.8375)">12140</div>
<div class="t" style="left:151.20px;top:236px;font-size:13px;line-height:15px;transform:scaleX(0.8057)">Castellón</div>
<div class="t" style="left:311.87px;top:236px;font-size:13px;line-height:15px;transform:scaleX(0.8335)">ESPAÑA</div>
<div class="t" style="left:24.86px;top:274px;font-size:13px;line-height:15px;transform:scaleX(0.8385)">Estado</div>
<div class="t" style="left:78.00px;top:274px;font-size:13px;line-height:15px;transform:scaleX(0.8460)">Aceptado</div>
<div class="t" style="left:498.76px;top:115px;font-size:13px;line-height:15px;transform:scaleX(0.8443)">Delegación</div>
<div class="t" style="left:594.09px;top:115px;font-size:13px;line-height:15px;transform:scaleX(0.8235)">CENTRAL</div>
<div class="t" style="left:498.80px;top:139px;font-size:13px;line-height:15px;transform:scaleX(0.7989)">Forma de Cobro</div>
<div class="t" style="left:594.08px;top:139px;font-size:13px;line-height:15px;transform:scaleX(0.8304)">GIROVISTA</div>
<div class="t" style="left:499.00px;top:164px;font-size:13px;line-height:15px;transform:scaleX(0.8443)">Agente</div>
<div class="t" style="left:594.08px;top:164px;font-size:13px;line-height:15px;transform:scaleX(0.8262)">SANDRA</div>
<div class="t" style="left:498.77px;top:197px;font-size:13px;line-height:15px;transform:scaleX(0.8277)">Dto Financiero</div>
<div class="t" style="left:614.20px;top:196px;font-size:13px;line-height:15px;transform:scaleX(0.8093)">0 %</div>
<div class="t" style="left:498.79px;top:221px;font-size:13px;line-height:15px;transform:scaleX(0.8138)">Portes</div>
<div class="t" style="left:643.37px;top:220px;font-size:13px;line-height:15px;transform:scaleX(0.8577)">0,00</div>
<div class="t" style="left:688.75px;top:221px;font-size:13px;line-height:15px;transform:scaleX(0.8454)">Debidos</div>
<div class="t" style="left:499.10px;top:245px;font-size:13px;line-height:15px;transform:scaleX(0.8075)">Gastos</div>
<div class="t" style="left:643.37px;top:244px;font-size:13px;line-height:15px;transform:scaleX(0.8577)">0,00</div>
<div class="t" style="left:515.17px;top:267px;font-size:13px;line-height:15px;transform:scaleX(0.8293)">Enviado / impreso</div>
<div class="t" style="left:8.73px;top:308px;font-size:13px;line-height:15px;transform:scaleX(0.8744)">Líneas</div>
<div class="t" style="left:53.57px;top:308px;font-size:13px;line-height:15px;transform:scaleX(0.8325)">Ficha</div>
<div class="t" style="left:95.55px;top:306px;font-size:13px;line-height:15px;transform:scaleX(0.8462)">Documento</div>
<div class="t" style="left:162.86px;top:308px;font-size:13px;line-height:15px;transform:scaleX(0.8400)">Notas</div>
<div class="t" style="left:204.89px;top:308px;font-size:13px;line-height:15px;transform:scaleX(0.8154)">Generar Documentos</div>
<div class="t" style="left:8.76px;top:629px;font-size:13px;line-height:15px;transform:scaleX(0.8391)">Base</div>
<div class="t" style="left:100.75px;top:628px;font-size:13px;line-height:15px;transform:scaleX(0.8471)">135,00</div>
<div class="t" style="left:145.30px;top:629px;font-size:13px;line-height:15px;transform:scaleX(0.8848)">IVA</div>
<div class="t" style="left:247.07px;top:628px;font-size:13px;line-height:15px;transform:scaleX(0.8478)">28,35</div>
<div class="t" style="left:292.45px;top:629px;font-size:13px;line-height:15px;transform:scaleX(0.8546)">Recargo</div>
<div class="t" style="left:389.38px;top:628px;font-size:13px;line-height:15px;transform:scaleX(0.8412)">0,00</div>
<div class="t" style="left:427.44px;top:629px;font-size:13px;line-height:15px;transform:scaleX(0.8634)">Retención</div>
<div class="t" style="left:529.98px;top:628px;font-size:13px;line-height:15px;transform:scaleX(0.8495)">0,00</div>
<div class="t" style="left:602.18px;top:629px;font-size:13px;line-height:15px;transform:scaleX(0.9552);font-weight:700">Total</div>
<div class="t" style="left:695.05px;top:628px;font-size:13px;line-height:15px;transform:scaleX(1.0019);font-weight:700">163,35</div>
<div class="t" style="left:742.75px;top:629px;font-size:13px;line-height:15px;transform:scaleX(0.8505)">EUR</div>
</div>
</body>
</html>
